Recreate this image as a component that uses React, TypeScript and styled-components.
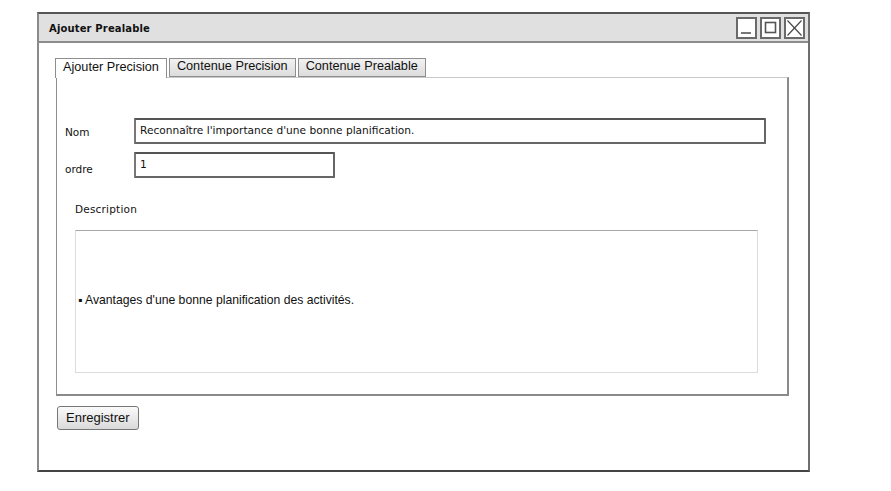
import React from "react";
import styled, { createGlobalStyle } from "styled-components";

const Global = createGlobalStyle`
  html, body { margin: 0; padding: 0; background: #fff; }
  * { box-sizing: border-box; }
`;

const Page = styled.div`
  padding: 12px 0 0 37px;
  width: 891px;
  height: 491px;
`;

const Window = styled.div`
  width: 773px;
  height: 460px;
  border: 2px solid #8a8a8a;
  border-top-color: #555;
  border-right-color: #6e6e6e;
  border-bottom-color: #444;
  display: flex;
  flex-direction: column;
  background: #fff;
`;

const TitleBar = styled.div`
  height: 29px;
  background: #e0e0e0;
  border-bottom: 2px solid #8c8c8c;
  display: flex;
  align-items: center;
  justify-content: space-between;
  padding: 0 3px 0 10px;
`;

const Title = styled.div`
  font-family: "DejaVu Sans", sans-serif;
  font-weight: bold;
  font-size: 10px;
  letter-spacing: 0.15px;
  color: #111;
  margin-top: 1px;
`;

const Controls = styled.div`
  display: flex;
  gap: 3px;
`;

const CtrlBtn = styled.div`
  width: 21px;
  height: 22px;
  border: 2px solid #6a6a6a;
  background: #fff;
  display: flex;
  align-items: center;
  justify-content: center;
`;

const Body = styled.div`
  flex: 1;
  padding: 14px 19px 0 16px;
  display: flex;
  flex-direction: column;
`;

const TabStrip = styled.div`
  display: flex;
  align-items: flex-end;
  gap: 2px;
  height: 20px;
  position: relative;
  z-index: 1;
`;

const Tab = styled.div<{ $active?: boolean }>`
  font-family: "Liberation Sans", Arial, sans-serif;
  font-size: 12.7px;
  color: #111;
  height: ${(p) => (p.$active ? "20px" : "19px")};
  padding: 0 7px 3px;
  display: flex;
  align-items: center;
  border: 1px solid #8e8e8e;
  border-bottom: ${(p) => (p.$active ? "none" : "1px solid #8e8e8e")};
  background: ${(p) =>
    p.$active ? "#fff" : "linear-gradient(#f2f2f2, #dcdcdc)"};
  margin-bottom: ${(p) => (p.$active ? "-1px" : "0")};
`;

const Panel = styled.div`
  margin-left: 1px;
  height: 319px;
  border: 1px solid #8e8e8e;
  border-top: 1px solid #c8c8c8;
  border-right: 2px solid #8a8a8a;
  border-bottom: 2px solid #8a8a8a;
  padding: 40px 21px 0 8px;
  display: flex;
  flex-direction: column;
`;

const FormGrid = styled.div`
  display: grid;
  grid-template-columns: 69px 1fr;
  row-gap: 8px;
  align-items: center;
`;

const Label = styled.div<{ $drop?: number }>`
  font-family: "DejaVu Sans", sans-serif;
  font-size: 10.5px;
  color: #111;
  padding-top: ${(p) => (p.$drop ?? 2)}px;
`;

const Input = styled.div<{ $w?: number }>`
  height: 26px;
  width: ${(p) => (p.$w ? `${p.$w}px` : "100%")};
  border: 2px solid #666;
  border-top-color: #555;
  border-left-color: #777;
  border-radius: 1px;
  font-family: "DejaVu Sans", sans-serif;
  font-size: 10.6px;
  color: #111;
  padding: 0 4px;
  display: flex;
  align-items: center;
  padding-bottom: 2px;
`;

const DescLabel = styled(Label)`
  margin: 23px 0 0 10px;
  letter-spacing: 0.2px;
`;

const TextArea = styled.div`
  margin: 15px 8px 0 10px;
  height: 143px;
  border: 1px solid #dcdcdc;
  border-top: 1px solid #a8a8a8;
  display: flex;
  align-items: center;
  padding: 0 2px 4px;
  font-family: "Liberation Sans", Arial, sans-serif;
  font-size: 12.2px;
  color: #111;
`;

const Button = styled.div`
  align-self: flex-start;
  margin-top: 10px;
  margin-left: 2px;
  height: 24px;
  padding: 0 8px 1px;
  border: 1px solid #777;
  border-radius: 3px;
  background: linear-gradient(#fafafa, #dadada);
  font-family: "Liberation Sans", Arial, sans-serif;
  font-size: 13px;
  color: #111;
  display: flex;
  align-items: center;
`;

export default function App() {
  return (
    <Page>
      <Global />
      <Window>
        <TitleBar>
          <Title>Ajouter Prealable</Title>
          <Controls>
            <CtrlBtn>
              <svg width="13" height="14" viewBox="0 0 13 14">
                <line x1="1" y1="12" x2="11" y2="12" stroke="#555" strokeWidth="1.6" />
              </svg>
            </CtrlBtn>
            <CtrlBtn>
              <svg width="13" height="13" viewBox="0 0 13 13">
                <rect x="1.5" y="1.5" width="10" height="10" fill="none" stroke="#555" strokeWidth="1.6" />
              </svg>
            </CtrlBtn>
            <CtrlBtn>
              <svg width="15" height="16" viewBox="0 0 15 16">
                <line x1="0.5" y1="0.5" x2="14.5" y2="15.5" stroke="#444" strokeWidth="1.1" />
                <line x1="14.5" y1="0.5" x2="0.5" y2="15.5" stroke="#444" strokeWidth="1.1" />
              </svg>
            </CtrlBtn>
          </Controls>
        </TitleBar>
        <Body>
          <TabStrip>
            <Tab $active>Ajouter Precision</Tab>
            <Tab>Contenue Precision</Tab>
            <Tab>Contenue Prealable</Tab>
          </TabStrip>
          <Panel>
            <FormGrid>
              <Label>Nom</Label>
              <Input>Reconnaître l'importance d'une bonne planification.</Input>
              <Label $drop={8}>ordre</Label>
              <Input $w={201}>1</Input>
            </FormGrid>
            <DescLabel>Description</DescLabel>
            <TextArea>▪ Avantages d'une bonne planification des activités.</TextArea>
          </Panel>
          <Button>Enregistrer</Button>
        </Body>
      </Window>
    </Page>
  );
}
